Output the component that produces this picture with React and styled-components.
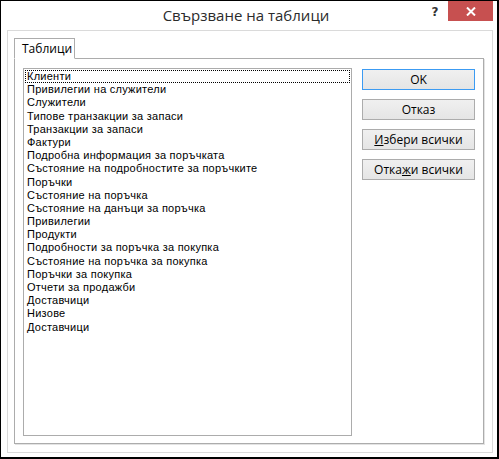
import React from 'react';
import styled, { createGlobalStyle } from 'styled-components';

const GlobalStyle = createGlobalStyle`
  html, body {
    margin: 0;
    padding: 0;
    background: #ffffff;
  }
`;

const StyledWindow = styled.div`
  width: 499px;
  height: 459px;
  box-sizing: border-box;
  border-style: solid;
  border-color: #000;
  border-width: 1px 2px 2px 1px;
  background: #ffffff;
  display: flex;
  flex-direction: column;
`;

const StyledTitleBar = styled.div`
  height: 29px;
  display: flex;
  align-items: flex-start;
  position: relative;
`;

const StyledTitle = styled.div`
  position: absolute;
  left: 0;
  right: 0;
  top: 4px;
  text-align: center;
  font-family: 'Open Sans', 'Noto Sans', sans-serif;
  font-size: 15px;
  color: #2b2b2b;
  padding-right: 6px;
`;

const StyledHelp = styled.div`
  margin-left: auto;
  margin-top: 1px;
  width: 26px;
  height: 19px;
  display: flex;
  align-items: center;
  justify-content: center;
  font-family: 'DejaVu Sans', sans-serif;
  font-weight: bold;
  font-size: 12px;
  color: #333;
`;

const StyledClose = styled.div`
  width: 45px;
  height: 20px;
  margin-right: 4px;
  background: #c75050;
  display: flex;
  align-items: center;
  justify-content: center;
`;

const StyledClient = styled.div`
  flex: 1;
  margin: 0 4px 4px 6px;
  border: 1px solid #dadada;
  padding: 7px 8px 8px 6px;
  display: flex;
  flex-direction: column;
`;

const StyledTabRow = styled.div`
  display: flex;
  position: relative;
  z-index: 1;
  margin-bottom: -1px;
`;

const StyledTab = styled.div`
  width: 61px;
  height: 21px;
  box-sizing: border-box;
  border: 1px solid #acacac;
  border-bottom-color: #fff;
  background: #fff;
  padding-left: 7px;
  font-family: 'Open Sans', 'Noto Sans', sans-serif;
  font-size: 12px;
  line-height: 19px;
  color: #000;
`;

const StyledPanel = styled.div`
  flex: 1;
  border: 1px solid #acacac;
  box-shadow: 1px 1px 0 #e3e3e3;
  padding: 9px 8px 7px 8px;
  display: flex;
  gap: 10px;
`;

const StyledList = styled.div`
  width: 329px;
  box-sizing: border-box;
  border: 1px solid #acacac;
  padding: 1px 1px 0;
  font-family: 'Liberation Sans', Arial, sans-serif;
  font-size: 11px;
  letter-spacing: 0.25px;
  color: #000;
`;

const StyledItem = styled.div`
  height: 13.2px;
  line-height: 13px;
  padding-left: 2px;
  white-space: nowrap;
  outline: ${(p) => (p.$focused ? '1px dotted #000' : 'none')};
  outline-offset: -1px;
`;

const StyledButtons = styled.div`
  display: flex;
  flex-direction: column;
  gap: 9px;
  padding-top: 1px;
`;

const StyledButton = styled.button`
  width: 113px;
  height: 21px;
  box-sizing: border-box;
  border: 1px solid ${(p) => (p.$default ? '#3c9bf2' : '#acacac')};
  background: linear-gradient(#f0f0f0, #e5e5e5);
  font-family: 'Open Sans', 'Noto Sans', sans-serif;
  font-size: 12px;
  color: #000;
  padding: 0;
  line-height: 18px;
`;

const items = [
  'Клиенти',
  'Привилегии на служители',
  'Служители',
  'Типове транзакции за запаси',
  'Транзакции за запаси',
  'Фактури',
  'Подробна информация за поръчката',
  'Състояние на подробностите за поръчките',
  'Поръчки',
  'Състояние на поръчка',
  'Състояние на данъци за поръчка',
  'Привилегии',
  'Продукти',
  'Подробности за поръчка за покупка',
  'Състояние на поръчка за покупка',
  'Поръчки за покупка',
  'Отчети за продажби',
  'Доставчици',
  'Низове',
  'Доставчици',
];

function App() {
  return (
    <>
      <GlobalStyle />
      <StyledWindow>
        <StyledTitleBar>
          <StyledTitle>Свързване на таблици</StyledTitle>
          <StyledHelp>?</StyledHelp>
          <StyledClose>
            <svg width="10" height="9" viewBox="0 0 10 9">
              <path d="M1 0.5 L9 8.5 M9 0.5 L1 8.5" stroke="#fff" strokeWidth="2" />
            </svg>
          </StyledClose>
        </StyledTitleBar>
        <StyledClient>
          <StyledTabRow>
            <StyledTab>Таблици</StyledTab>
          </StyledTabRow>
          <StyledPanel>
            <StyledList>
              {items.map((item, i) => (
                <StyledItem key={i} $focused={i === 0}>
                  {item}
                </StyledItem>
              ))}
            </StyledList>
            <StyledButtons>
              <StyledButton $default>OK</StyledButton>
              <StyledButton>Отказ</StyledButton>
              <StyledButton>
                <u>И</u>збери всички
              </StyledButton>
              <StyledButton>
                Отка<u>ж</u>и всички
              </StyledButton>
            </StyledButtons>
          </StyledPanel>
        </StyledClient>
      </StyledWindow>
    </>
  );
}

export default App;
